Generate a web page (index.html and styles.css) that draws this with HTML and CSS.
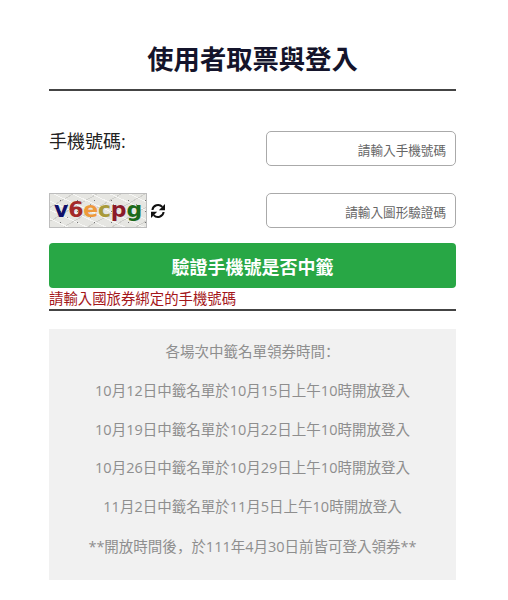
FILE: index.html
```html
<!DOCTYPE html>
<html lang="zh-Hant">
<head>
  <meta charset="UTF-8" />
  <meta name="viewport" content="width=device-width, initial-scale=1.0"/>
  <title>使用者取票與登入</title>
  <link rel="stylesheet" href="styles.css">
</head>
<body>
  <div class="wrapper">
    <h1 class="page-title">使用者取票與登入</h1>

    <div class="form-row phone-row">
      <label for="phone">手機號碼:</label>
      <input id="phone" type="text" placeholder="請輸入手機號碼">
    </div>

    <div class="form-row captcha-row">
      <div class="captcha-group">
        <div class="captcha" aria-label="captcha">
          <span class="c1">v</span><span class="c2">6</span><span class="c3">e</span><span class="c4">c</span><span class="c5">p</span><span class="c6">g</span>
        </div>
        <svg class="refresh" viewBox="0 0 16 16" width="16" height="16" aria-hidden="true">
          <path d="M2.4 7A5.7 5.7 0 0 1 12.3 3.9" fill="none" stroke="#111" stroke-width="2"/>
          <path d="M15 1v6.2H8.8z" fill="#111"/>
          <path d="M13.6 9A5.7 5.7 0 0 1 3.7 12.1" fill="none" stroke="#111" stroke-width="2"/>
          <path d="M1 15V8.8h6.2z" fill="#111"/>
        </svg>
      </div>
      <input id="captcha" type="text" placeholder="請輸入圖形驗證碼">
    </div>

    <button class="verify-btn" type="button">驗證手機號是否中籤</button>
    <div class="hint">請輸入國旅券綁定的手機號碼</div>

    <div class="schedule">
      <p>各場次中籤名單領券時間<span class="punct" lang="zh-Hans">：</span></p>
      <p>10月12日中籤名單於10月15日上午10時開放登入</p>
      <p>10月19日中籤名單於10月22日上午10時開放登入</p>
      <p>10月26日中籤名單於10月29日上午10時開放登入</p>
      <p>11月2日中籤名單於11月5日上午10時開放登入</p>
      <p>**開放時間後<span class="punct" lang="zh-Hans">，</span>於111年4月30日前皆可登入領券**</p>
    </div>
  </div>
</body>
</html>
```

FILE: styles.css
```css
* {
  box-sizing: border-box;
}

body {
  margin: 0;
  background: #fff;
  font-family: "Open Sans", "Noto Sans CJK TC", sans-serif;
  color: #212529;
}

.wrapper {
  width: 407px;
  margin-left: 49px;
  padding-top: 41px;
}

.page-title {
  margin: 0;
  height: 50px;
  border-bottom: 2px solid #444;
  text-align: center;
  font-size: 26.3px;
  line-height: 36px;
  font-weight: 700;
  color: #14142b;
}

.form-row {
  display: flex;
  justify-content: space-between;
}

.phone-row {
  margin-top: 40px;
  height: 62px;
}

.phone-row label {
  font-size: 18px;
  line-height: 20px;
  color: #222;
}

.form-row input {
  width: 190px;
  height: 35px;
  padding: 3px 9px 0 0;
  border: 1px solid #aaa;
  border-radius: 5px;
  background: #fff;
  text-align: right;
  font-family: inherit;
  font-size: 12.6px;
}

.form-row input::placeholder {
  color: #666;
  opacity: 1;
}

.captcha-group {
  display: flex;
  align-items: center;
  align-self: flex-start;
  gap: 3px;
}

.captcha {
  width: 98px;
  height: 35px;
  background-color: #e6e6e2;
  background-image:
    radial-gradient(circle, #777 0.5px, transparent 0.8px),
    radial-gradient(circle, #999 0.5px, transparent 0.8px),
    repeating-linear-gradient(25deg, transparent 0 7px, #f6f6f4 7px 8px),
    repeating-linear-gradient(150deg, transparent 0 11px, #cfcfcb 11px 12px);
  background-size: 17px 11px, 23px 13px, auto, auto;
  background-position: 2px 1px, 6px 4px, 0 0, 0 0;
  border: 1px solid #bdbdbd;
  text-align: center;
  font-family: "DejaVu Sans", sans-serif;
  font-size: 22px;
  line-height: 31px;
  font-weight: 700;
  letter-spacing: -0.2px;
}

.c1 { color: #10106a; }
.c2 { color: #a32a2a; }
.c3 { color: #ee9a3c; }
.c4 { color: #a89a3a; }
.c5 { color: #8c1a2a; }
.c6 { color: #1c6a1c; }

.refresh {
  display: block;
}

.captcha-row {
  height: 50px;
}

.verify-btn {
  display: block;
  width: 100%;
  height: 45px;
  margin-bottom: 1px;
  border: none;
  border-radius: 4px;
  background: #28a745;
  color: #fff;
  font-family: inherit;
  font-size: 18px;
  font-weight: 700;
  padding: 0;
}

.hint {
  height: 22px;
  border-bottom: 2px solid #444;
  color: #a4161a;
  font-size: 14.4px;
  line-height: 20px;
}

.schedule {
  margin-top: 18px;
  height: 251px;
  padding-top: 12px;
  background: #f1f1f1;
  text-align: center;
  color: #8e8e8e;
  font-size: 14.5px;
  line-height: 20px;
}

.schedule p {
  margin: 0 0 18.8px;
}

.punct {
  font-family: "Noto Sans CJK SC", sans-serif;
}
```
